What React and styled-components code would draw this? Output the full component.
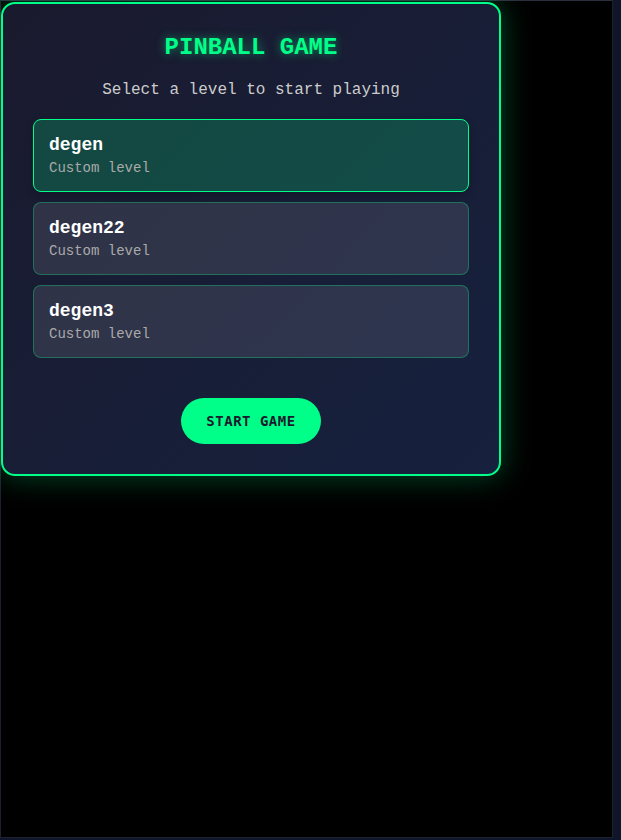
import React, { useState } from "react";
import styled, { createGlobalStyle } from "styled-components";

const GlobalStyle = createGlobalStyle`
  html, body {
    margin: 0;
    padding: 0;
    background: #0f1629;
  }
  * {
    box-sizing: border-box;
  }
`;

const levels = [
  { id: "degen", name: "degen", desc: "Custom level" },
  { id: "degen22", name: "degen22", desc: "Custom level" },
  { id: "degen3", name: "degen3", desc: "Custom level" },
];

function App() {
  const [selected, setSelected] = useState("degen");

  return (
    <>
      <GlobalStyle />
      <Screen>
        <Menu>
          <Title>PINBALL GAME</Title>
          <Subtitle>Select a level to start playing</Subtitle>
          <LevelList>
            {levels.map((level) => (
              <LevelButton
                key={level.id}
                $active={selected === level.id}
                onClick={() => setSelected(level.id)}
              >
                <LevelName>{level.name}</LevelName>
                <LevelDesc>{level.desc}</LevelDesc>
              </LevelButton>
            ))}
          </LevelList>
          <StartButton>START GAME</StartButton>
        </Menu>
      </Screen>
    </>
  );
}

export default App;

const Screen = styled.div`
  width: 613px;
  height: 838px;
  background: #000;
  border: 1px solid #1c2030;
  border-top-color: #2a2e3d;
  padding-top: 1px;
`;

const Menu = styled.div`
  width: 500px;
  display: flex;
  flex-direction: column;
  align-items: center;
  padding: 30px;
  border: 2px solid #00ff88;
  border-radius: 14px;
  background: linear-gradient(135deg, #1a1a2e 0%, #16213e 100%);
  box-shadow: 0 0 30px rgba(0, 255, 136, 0.3);
  font-family: "Courier New", Courier, "Nimbus Mono PS", FreeMono,
    "Liberation Mono", monospace;
`;

const Title = styled.h1`
  margin: 0 0 20px;
  font-size: 24px;
  font-weight: bold;
  color: #00ff88;
  text-shadow: 0 0 10px rgba(0, 255, 136, 0.5);
`;

const Subtitle = styled.p`
  margin: 0 0 20px;
  font-size: 16px;
  color: #cccccc;
`;

const LevelList = styled.div`
  width: 100%;
  display: flex;
  flex-direction: column;
  gap: 10px;
  margin-bottom: 40px;
`;

const LevelButton = styled.div`
  padding: 15px;
  border-radius: 8px;
  cursor: pointer;
  border: 1px solid
    ${(p) => (p.$active ? "#00ff88" : "rgba(0, 255, 136, 0.3)")};
  background: ${(p) =>
    p.$active ? "rgba(0, 255, 136, 0.2)" : "rgba(255, 255, 255, 0.1)"};
  box-shadow: ${(p) =>
    p.$active ? "0 4px 10px rgba(0, 0, 0, 0.2)" : "none"};
`;

const LevelName = styled.div`
  font-size: 18px;
  font-weight: bold;
  color: #ffffff;
  margin-bottom: 5px;
`;

const LevelDesc = styled.div`
  font-size: 14px;
  color: #aaaaaa;
`;

const StartButton = styled.button`
  padding: 15px 25px;
  border: none;
  border-radius: 25px;
  background: #00ff88;
  color: #1a1a2e;
  font-family: "DejaVu Sans Mono", monospace;
  font-size: 14px;
  font-weight: bold;
  letter-spacing: 0.5px;
  cursor: pointer;
`;
